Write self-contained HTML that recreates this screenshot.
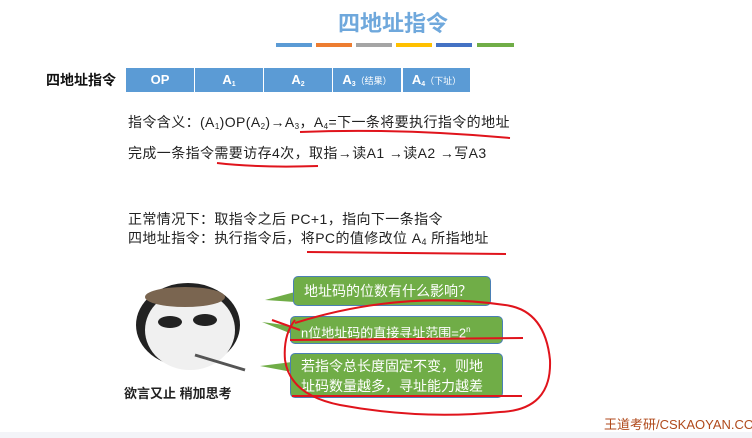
<!DOCTYPE html>
<html><head><meta charset="utf-8"><style>
body{margin:0;width:752px;height:438px;background:#fff;position:relative;overflow:hidden;font-family:"Liberation Sans","Noto Sans CJK SC",sans-serif;}
.a{position:absolute;white-space:nowrap}
.t{font-size:14px;color:#222;letter-spacing:0.4px;line-height:18px}
sub{vertical-align:-2px;line-height:0}
.cell{position:absolute;top:68px;height:24px;background:#5b9bd5;color:#fff;font-weight:bold;font-size:13px;text-align:center;line-height:24px}
.b{position:absolute;background:#70ad47;border:1px solid #4a7fb5;border-radius:5px;color:#fff;font-size:14px;padding:0 10px;box-sizing:border-box}
</style></head><body>
<div class="a" style="left:338px;top:6px;font-size:22px;font-weight:bold;color:#6fa8dc">四地址指令</div>
<div class="a" style="left:276px;top:43px;width:36px;height:4px;background:#5b9bd5"></div>
<div class="a" style="left:316px;top:43px;width:36px;height:4px;background:#ed7d31"></div>
<div class="a" style="left:356px;top:43px;width:36px;height:4px;background:#a5a5a5"></div>
<div class="a" style="left:396px;top:43px;width:36px;height:4px;background:#ffc000"></div>
<div class="a" style="left:436px;top:43px;width:36px;height:4px;background:#4472c4"></div>
<div class="a" style="left:477px;top:43px;width:37px;height:4px;background:#70ad47"></div>
<div class="a" style="left:46px;top:70px;font-size:14px;font-weight:bold;color:#111">四地址指令</div>
<div class="cell" style="left:126px;width:68px">OP</div>
<div class="cell" style="left:195px;width:68px">A<sub style="font-size:7px">1</sub></div>
<div class="cell" style="left:264px;width:68px">A<sub style="font-size:7px">2</sub></div>
<div class="cell" style="left:333px;width:68px">A<sub style="font-size:7px">3</sub><span style="font-size:9px;font-weight:normal">（结果）</span></div>
<div class="cell" style="left:403px;width:67px">A<sub style="font-size:7px">4</sub><span style="font-size:9px;font-weight:normal">（下址）</span></div>
<div class="a t" style="left:128px;top:113px">指令含义：(A<sub style="font-size:8px">1</sub>)OP(A<sub style="font-size:8px">2</sub>)<b>→</b>A<sub style="font-size:8px">3</sub>，A<sub style="font-size:8px">4</sub>=下一条将要执行指令的地址</div>
<div class="a t" style="left:128px;top:144px">完成一条指令需要访存4次，取指<b>→</b>读A1 <b>→</b>读A2 <b>→</b>写A3</div>
<div class="a t" style="left:128px;top:210px">正常情况下：取指令之后 PC+1，指向下一条指令</div>
<div class="a t" style="left:128px;top:229px">四地址指令：执行指令后，将PC的值修改位 A<sub style="font-size:9px">4</sub> 所指地址</div>
<svg class="a" style="left:0;top:0" width="752" height="438">
<path d="M300 132 Q400 128 510 138" stroke="#e0141c" stroke-width="2" fill="none"/>
<path d="M217 163 Q260 168 318 166" stroke="#e0141c" stroke-width="2" fill="none"/>
<path d="M307 252 L506 254" stroke="#e0141c" stroke-width="2" fill="none"/>
<path d="M265 300 L295 292 L295 302 Z" fill="#70ad47"/>
<path d="M262 322 L292 326 L292 334 Z" fill="#70ad47"/>
<path d="M260 366 L292 362 L292 372 Z" fill="#70ad47"/>
</svg>
<div class="b" style="left:293px;top:276px;width:198px;height:30px;line-height:28px">地址码的位数有什么影响？</div>
<div class="b" style="left:290px;top:316px;width:213px;height:28px;line-height:26px;font-size:13px">n位地址码的直接寻址范围=2<sup style="font-size:8px">n</sup></div>
<div class="b" style="left:290px;top:353px;width:213px;height:45px;line-height:20px;padding-top:2px">若指令总长度固定不变，则地<br>址码数量越多，寻址能力越差</div>
<svg class="a" style="left:0;top:0" width="752" height="438">
<path d="M295 323 Q400 290 505 305 Q545 310 550 360 Q552 410 500 412 Q420 420 340 405 Q290 395 285 360 Q283 335 295 320" stroke="#e0141c" stroke-width="2" fill="none"/>
<path d="M290 340 L523 338" stroke="#e0141c" stroke-width="2" fill="none"/>
<path d="M292 396 L522 396" stroke="#e0141c" stroke-width="2" fill="none"/>
<path d="M272 320 L300 330" stroke="#e0141c" stroke-width="2" fill="none"/>
<ellipse cx="188" cy="325" rx="52" ry="42" fill="#222"/>
<ellipse cx="190" cy="330" rx="45" ry="40" fill="#f0f0f0"/>
<ellipse cx="185" cy="297" rx="40" ry="10" fill="#7a6550"/>
<ellipse cx="170" cy="322" rx="12" ry="6" fill="#222"/>
<ellipse cx="205" cy="320" rx="12" ry="6" fill="#222"/>
<path d="M195 355 L245 370" stroke="#555" stroke-width="3"/>
</svg>
<div class="a" style="left:124px;top:383px;font-size:13px;font-weight:bold;color:#222">欲言又止 稍加思考</div>
<div class="a" style="left:604px;top:414px;font-size:13px;color:#b04a1c">王道考研/CSKAOYAN.COM</div>
<div class="a" style="left:0;top:432px;width:752px;height:6px;background:#f3f4f8"></div>
</body></html>
